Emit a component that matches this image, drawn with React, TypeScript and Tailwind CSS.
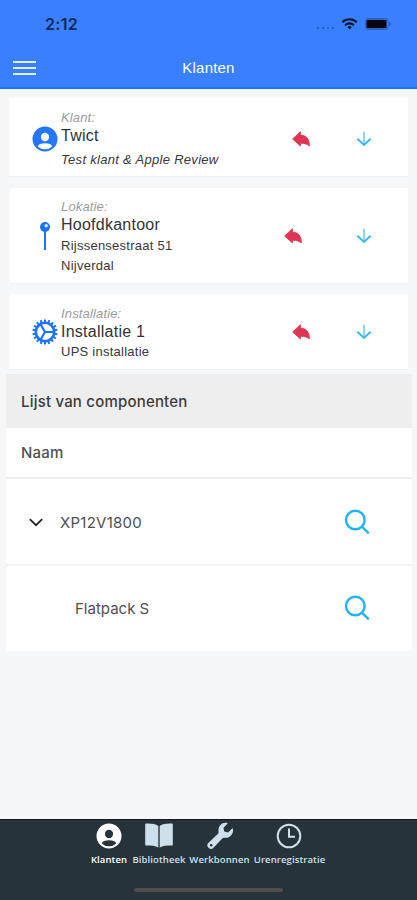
import clsx from "clsx";
import type { ReactNode } from "react";

function PersonIcon({ className }: { className?: string }) {
  return (
    <svg viewBox="0 0 26 26" className={className}>
      <path
        fill="currentColor"
        fillRule="evenodd"
        d="M13 .5a12.500 12.500 0 1 0 0 25 12.500 12.500 0 0 0 0-25Zm0 6.300a4.100 4.200 0 1 1 0 8.400 4.100 4.200 0 0 1 0-8.400Zm0 10.500c4 0 6.600 1.200 7.200 3.100a10.400 10.400 0 0 1-14.400 0c.6-1.900 3.200-3.100 7.200-3.100Z"
      />
    </svg>
  );
}

function PinIcon() {
  return (
    <svg viewBox="0 0 12 30" className="w-3 h-[30px] text-[#1a73f8]">
      <path d="M6 9v20" stroke="currentColor" strokeWidth="2" />
      <circle cx="6" cy="6" r="5" fill="currentColor" />
      <circle cx="7.200" cy="4.800" r="1.700" fill="#dbe9ff" />
    </svg>
  );
}

const TEETH = Array.from({ length: 18 }, (_, i) => i * 20);

function GearIcon() {
  return (
    <svg viewBox="-13 -13 26 26" className="w-[26px] h-[26px]" stroke="#1a73f8" fill="none">
      <circle r="9.200" strokeWidth="2.600" />
      {TEETH.map((angle) => (
        <path key={angle} d="M0-9.500V-12.600" strokeWidth="2" transform={`rotate(${angle})`} />
      ))}
      <path d="M0 0H9M0 0-4.500-7.800M0 0-4.500 7.800" strokeWidth="2.200" />
    </svg>
  );
}

function UndoIcon() {
  return (
    <svg viewBox="0 0 18 16" className="w-[18px] h-4">
      <path
        d="M8.400.8v3.300c5.800.2 9.200 3.900 8.900 10.900-1.600-1.900-4.400-2.800-8.900-2.800v2.800L.7 7.900Z"
        fill="#e03552"
        stroke="#e03552"
        strokeWidth=".9"
        strokeLinejoin="round"
      />
    </svg>
  );
}

function DownIcon() {
  return (
    <svg viewBox="0 0 16 16" className="w-4 h-4" fill="none">
      <path d="M8 .8V14" stroke="#8ed3fa" strokeWidth="2" />
      <path d="m1.300 7.800 6.700 6.200 6.700-6.200" stroke="#35b7f5" strokeWidth="1.900" />
    </svg>
  );
}

function SearchIcon() {
  return (
    <svg viewBox="0 0 26 26" className="w-[26px] h-[26px]" fill="none" stroke="#1eb4f7" strokeWidth="2.400">
      <circle cx="11.300" cy="11" r="9.300" />
      <path d="m17.800 17.500 7 6.800" />
    </svg>
  );
}

interface InfoCardProps {
  icon: ReactNode;
  label: string;
  title: string;
  className: string;
  textClassName?: string;
  undoClassName?: string;
  children: ReactNode;
}

function InfoCard({ icon, label, title, className, textClassName = "pt-3", undoClassName, children }: InfoCardProps) {
  return (
    <section className={clsx("flex items-center bg-white border-b border-[#f0f1f2] mx-2.5 w-[398px]", className)}>
      <div className="w-[51px] shrink-0 flex justify-end">
        <div className="w-8 flex justify-center">{icon}</div>
      </div>
      <div className={clsx("w-[222px] shrink-0 self-start text-[13px] leading-5 text-[#383838]", textClassName)}>
        <p className="leading-4 italic tracking-[0.15px] text-[#9c9c9c]">{label}</p>
        <p className="text-base leading-5 tracking-[0.25px] text-[#333]">{title}</p>
        {children}
      </div>
      <button className={clsx("w-9 flex justify-center", undoClassName)}>
        <UndoIcon />
      </button>
      <button className="w-4 ml-[37px]">
        <DownIcon />
      </button>
    </section>
  );
}

function StatusBar() {
  return (
    <div className="h-12 flex items-center pl-[45px] pr-[25px] text-[#102a5c]">
      <span className="font-[Inter] text-[16px] font-semibold tracking-[0.3px]">2:12</span>
      <div className="ml-auto flex items-center">
        <div className="flex gap-[3px] pt-2 mr-[7px]">
          {[0, 1, 2, 3].map((dot) => (
            <i key={dot} className="w-[2px] h-[2px] rounded-full bg-[#2752a8]" />
          ))}
        </div>
        <svg viewBox="0 0 18 13" className="w-[17px] h-3 mr-[7px]" fill="none" stroke="#07142e" strokeWidth="2.200">
          <path d="M1.200 4.700a11 11 0 0 1 15.600 0M4.200 7.800a6.800 6.800 0 0 1 9.600 0" />
          <path d="m9 12.500-2.500-2.700a3.600 3.600 0 0 1 5 0Z" fill="#07142e" stroke="none" />
        </svg>
        <svg viewBox="0 0 27 12" className="w-[27px] h-3">
          <rect x=".5" y=".5" width="22.500" height="11" rx="2" fill="none" stroke="#2a62c8" />
          <rect x="1.500" y="1.800" width="20" height="8.400" rx=".8" fill="#020611" />
          <path d="M24.300 3.800c2 .8 2 3.600 0 4.400Z" fill="#1d4a9c" />
        </svg>
      </div>
    </div>
  );
}

const TABS = [
  {
    label: "Klanten",
    width: "w-[38px]",
    active: true,
    icon: <PersonIcon className="w-[26px] h-[26px]" />,
  },
  {
    label: "Bibliotheek",
    width: "w-[54px]",
    icon: (
      <svg viewBox="0 0 28 25" className="w-7 h-[25px] -mt-0.5" fill="currentColor">
        <path d="M13.300 3C10.500.8 5.500.3 1 .6a1 1 0 0 0-.8 1v20c0 .6.4 1 1 1 5 0 9.500.3 12.100 1.900ZM14.700 3C17.500.8 22.500.3 27 .6a1 1 0 0 1 .8 1v20c0 .6-.4 1-1 1-5 0-9.500.3-12.100 1.900Z" />
      </svg>
    ),
  },
  {
    label: "Werkbonnen",
    width: "w-[61px]",
    icon: (
      <svg viewBox="0 0 28 28" className="w-7 h-7" fill="currentColor">
        <path
          fillRule="evenodd"
          d="M21.800 1.200 17.500 5.700l.7 3.900 4 .8 4.400-4.300c1.800 4.800-2.200 10.200-7.300 9.700-1.400-.1-2.400.1-3.300 1l-8.500 9a3.500 3.500 0 0 1-5-5l9-8.500c1-.9 1.100-1.900 1-3.300C12 3.900 16.500-.5 21.800 1.200ZM5.200 21.900a1.300 1.300 0 1 0 0 2.600 1.300 1.300 0 0 0 0-2.600Z"
        />
      </svg>
    ),
  },
  {
    label: "Urenregistratie",
    width: "w-[73px]",
    icon: (
      <svg viewBox="0 0 26 26" className="w-[26px] h-[26px] mr-0.5" fill="none" stroke="currentColor" strokeWidth="2">
        <circle cx="13" cy="13" r="11.300" />
        <path d="M13 5.500v8.300h6" />
      </svg>
    ),
  },
];

export default function App() {
  return (
    <div className="w-[417px] h-[900px] flex flex-col overflow-hidden bg-[#f6f7f9] font-['Liberation_Sans',sans-serif]">
      <header className="h-[89px] shrink-0 bg-[#3880ff] border-b-2 border-[#1c72f8]">
        <StatusBar />
        <div className="h-10 grid grid-cols-[1fr_auto_1fr] items-center px-[13px] text-white">
          <div className="w-[23px] flex flex-col gap-1">
            <i className="h-[2px] bg-[#e6efff]" />
            <i className="h-[2px] bg-[#e6efff]" />
            <i className="h-[2px] bg-[#e6efff]" />
          </div>
          <h1 className="text-[15px] tracking-[0.2px]">Klanten</h1>
        </div>
      </header>

      <main className="flex-1">
        <InfoCard
          className="mt-[9px] h-[79px] pt-[3px]"
          textClassName="pt-[9px]"
          icon={<PersonIcon className="w-[26px] h-[26px] text-[#2277fb]" />}
          label="Klant:"
          title="Twict"
        >
          <p className="italic pt-1 tracking-[0.3px]">Test klant &amp; Apple Review</p>
        </InfoCard>
        <InfoCard
          className="mt-[11px] h-24"
          textClassName="pt-[11px]"
          undoClassName="-ml-2 mr-2"
          icon={<PinIcon />}
          label="Lokatie:"
          title="Hoofdkantoor"
        >
          <p className="pt-px tracking-[0.25px]">Rijssensestraat 51</p>
          <p className="tracking-[0.25px]">Nijverdal</p>
        </InfoCard>
        <InfoCard className="mt-2.5 h-[76px]" icon={<GearIcon />} label="Installatie:" title="Installatie 1">
          <p className="tracking-[0.25px]">UPS installatie</p>
        </InfoCard>

        <section className="mt-1 ml-1.5 w-[406px] bg-white font-[Inter] text-[15px] text-[#505050]">
          <h2 className="h-[54px] flex items-center px-[15px] pt-0.5 bg-[#eeeeee] font-medium tracking-[0.2px] text-[#3c3c3c]">
            Lijst van componenten
          </h2>
          <div className="h-[51px] flex items-center px-[15px] pt-0.5 border-b-2 border-[#ebedee] font-medium tracking-[0.2px]">
            Naam
          </div>
          <div className="h-[87px] flex items-center pl-[23px] pr-[42px] border-b-2 border-[#f1f2f4]">
            <svg viewBox="0 0 14 9" className="w-3.5 h-[9px] mt-0.5" fill="none" stroke="#222" strokeWidth="1.700">
              <path d="m.8 1.200 6.200 6 6.200-6" />
            </svg>
            <span className="ml-[17px] mr-auto pt-[3px] tracking-[0.25px]">XP12V1800</span>
            <SearchIcon />
          </div>
          <div className="h-[85px] flex items-center pl-[69px] pr-[42px]">
            <span className="mr-auto pt-0.5">Flatpack S</span>
            <div className="-mt-0.5">
              <SearchIcon />
            </div>
          </div>
        </section>
      </main>

      <footer className="h-[81px] shrink-0 flex flex-col items-center bg-[#26333b] border-t border-[#111b20]">
        <nav className="flex gap-[3px] pt-[2px]">
          {TABS.map((tab) => (
            <a
              key={tab.label}
              className={clsx(
                "flex flex-col items-center",
                tab.width,
                tab.active ? "-ml-px mr-px text-white" : "text-[#cfe0ed]"
              )}
            >
              <div className="h-7 flex items-center">{tab.icon}</div>
              <span className="font-['Open_Sans'] text-[9.500px] leading-5 font-semibold tracking-[0.1px] whitespace-nowrap">
                {tab.label}
              </span>
            </a>
          ))}
        </nav>
        <div className="mt-[18px] w-[149px] h-1 rounded-full bg-[#524d4b]" />
      </footer>
    </div>
  );
}
